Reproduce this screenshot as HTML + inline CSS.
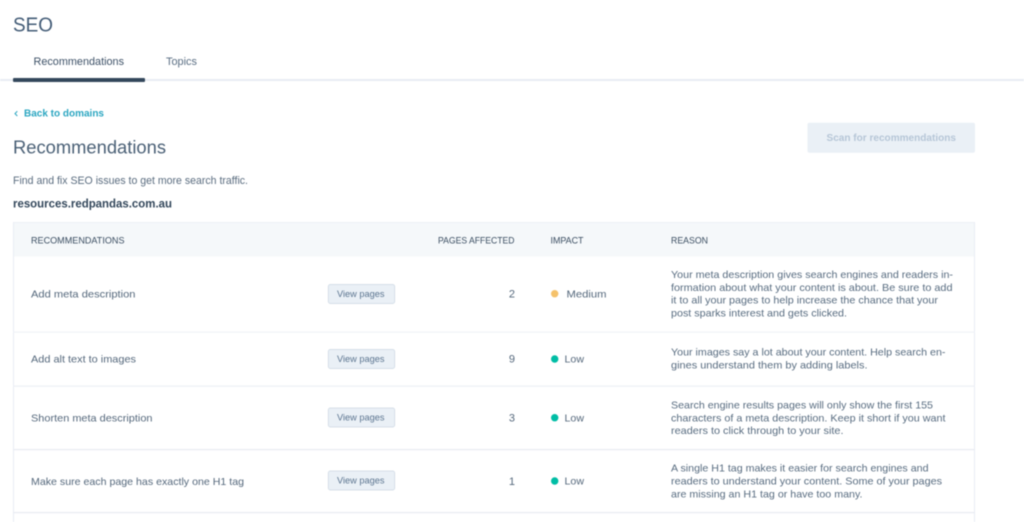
<!DOCTYPE html>
<html lang="en">
<head>
<meta charset="utf-8">
<title>SEO Recommendations</title>
<style>
html,body{margin:0;padding:0;background:#fff;width:1024px;height:522px;overflow:hidden}
svg{display:block;filter:blur(.4px)}
text{font-family:"Liberation Sans",sans-serif;fill:#55687c;font-size:10.5px}
.h{font-size:9.5px;fill:#3a4d61}
.r{font-size:10.5px;fill:#586c80}
.b{font-size:9px;fill:#5c7590}
</style>
</head>
<body>
<svg width="1024" height="522" viewBox="0 0 1024 522" xmlns="http://www.w3.org/2000/svg">
<rect width="1024" height="522" fill="#fff"/>
<text x="13" y="31.5" style="font-size:20px;fill:#425b76" textLength="40" lengthAdjust="spacingAndGlyphs">SEO</text>
<text x="33.5" y="65" style="font-size:11px;fill:#3d5167" textLength="90.5" lengthAdjust="spacingAndGlyphs">Recommendations</text>
<text x="166" y="65" style="font-size:11px;fill:#5a6e83" textLength="31" lengthAdjust="spacingAndGlyphs">Topics</text>
<rect x="0" y="79" width="1024" height="2" fill="#e8edf3"/>
<rect x="13" y="78" width="132" height="4" rx="1" fill="#33475b"/>
<path d="M17.3 111.2 L15 113.6 L17.3 116" fill="none" stroke="#2aa5c0" stroke-width="1"/>
<text x="24" y="116.7" style="font-size:10.5px;font-weight:bold;fill:#2ba6c1" textLength="80" lengthAdjust="spacingAndGlyphs">Back to domains</text>
<text x="13" y="153.5" style="font-size:18px;fill:#4a6076" textLength="153" lengthAdjust="spacingAndGlyphs">Recommendations</text>
<text x="13" y="184" style="font-size:11px;fill:#5a6c7f" textLength="235" lengthAdjust="spacingAndGlyphs">Find and fix SEO issues to get more search traffic.</text>
<text x="13" y="207.5" style="font-size:12px;font-weight:bold;fill:#33475b" textLength="159" lengthAdjust="spacingAndGlyphs">resources.redpandas.com.au</text>

<rect x="807.5" y="122.7" width="167.5" height="30" rx="2" fill="#eaf0f6"/>
<text x="826.5" y="141" style="font-size:10px;font-weight:bold;fill:#b6c6d7" textLength="129.5" lengthAdjust="spacingAndGlyphs">Scan for recommendations</text>

<rect x="13.5" y="222.5" width="961" height="34" fill="#f5f8fa"/>
<rect x="13" y="222" width="962" height="1" fill="#edf1f6"/>
<rect x="13" y="222" width="1" height="300" fill="#e9edf4"/>
<rect x="974" y="222" width="1" height="300" fill="#e9edf4"/>
<rect x="13" y="331.5" width="962" height="1.2" fill="#eff2f7"/>
<rect x="13" y="385.5" width="962" height="1.2" fill="#eceff5"/>
<rect x="13" y="449" width="962" height="1.2" fill="#e8ebf2"/>
<rect x="13" y="512" width="962" height="1.2" fill="#e8ebf2"/>

<text class="h" x="31" y="243.7" textLength="93.5" lengthAdjust="spacingAndGlyphs">RECOMMENDATIONS</text>
<text class="h" x="438" y="243.7" textLength="76.5" lengthAdjust="spacingAndGlyphs">PAGES AFFECTED</text>
<text class="h" x="550.5" y="243.7" textLength="33" lengthAdjust="spacingAndGlyphs">IMPACT</text>
<text class="h" x="671" y="243.7" textLength="37" lengthAdjust="spacingAndGlyphs">REASON</text>

<text x="31" y="297.7" textLength="104.5" lengthAdjust="spacingAndGlyphs">Add meta description</text>
<text x="31" y="362.7" textLength="105" lengthAdjust="spacingAndGlyphs">Add alt text to images</text>
<text x="31" y="421.7" textLength="121.5" lengthAdjust="spacingAndGlyphs">Shorten meta description</text>
<text x="31" y="485" textLength="213" lengthAdjust="spacingAndGlyphs">Make sure each page has exactly one H1 tag</text>

<g fill="#eaf0f6" stroke="#cbd6e2" stroke-width=".7">
<rect x="328.3" y="284.5" width="66.4" height="19" rx="2"/>
<rect x="328.3" y="349.5" width="66.4" height="19" rx="2"/>
<rect x="328.3" y="408" width="66.4" height="19" rx="2"/>
<rect x="328.3" y="471" width="66.4" height="19" rx="2"/>
</g>
<text class="b" x="337" y="297" textLength="47.5" lengthAdjust="spacingAndGlyphs">View pages</text>
<text class="b" x="337" y="362" textLength="47.5" lengthAdjust="spacingAndGlyphs">View pages</text>
<text class="b" x="337" y="420.5" textLength="47.5" lengthAdjust="spacingAndGlyphs">View pages</text>
<text class="b" x="337" y="483.5" textLength="47.5" lengthAdjust="spacingAndGlyphs">View pages</text>

<g text-anchor="end">
<text x="515" y="297.5" style="font-size:11px">2</text>
<text x="515" y="362.5" style="font-size:11px">9</text>
<text x="515" y="421.5" style="font-size:11px">3</text>
<text x="515" y="485" style="font-size:11px">1</text>
</g>

<circle cx="554.7" cy="293.7" r="3.7" fill="#f5c26b"/>
<circle cx="554.7" cy="359" r="3.7" fill="#00bda5"/>
<circle cx="554.7" cy="417.7" r="3.7" fill="#00bda5"/>
<circle cx="554.7" cy="481" r="3.7" fill="#00bda5"/>
<text x="566.5" y="297.7" textLength="40" lengthAdjust="spacingAndGlyphs">Medium</text>
<text x="564.5" y="362.7" textLength="19.5" lengthAdjust="spacingAndGlyphs">Low</text>
<text x="564.5" y="421.7" textLength="19.5" lengthAdjust="spacingAndGlyphs">Low</text>
<text x="564.5" y="484.7" textLength="19.5" lengthAdjust="spacingAndGlyphs">Low</text>

<text class="r" x="671" y="278" textLength="282" lengthAdjust="spacingAndGlyphs">Your meta description gives search engines and readers in-</text>
<text class="r" x="671" y="291" textLength="281.5" lengthAdjust="spacingAndGlyphs">formation about what your content is about. Be sure to add</text>
<text class="r" x="671" y="303.7" textLength="267" lengthAdjust="spacingAndGlyphs">it to all your pages to help increase the chance that your</text>
<text class="r" x="671" y="316.7" textLength="176" lengthAdjust="spacingAndGlyphs">post sparks interest and gets clicked.</text>

<text class="r" x="671" y="355.7" textLength="274.5" lengthAdjust="spacingAndGlyphs">Your images say a lot about your content. Help search en-</text>
<text class="r" x="671" y="368.5" textLength="196.5" lengthAdjust="spacingAndGlyphs">gines understand them by adding labels.</text>

<text class="r" x="671" y="408.3" textLength="262" lengthAdjust="spacingAndGlyphs">Search engine results pages will only show the first 155</text>
<text class="r" x="671" y="421.3" textLength="274.5" lengthAdjust="spacingAndGlyphs">characters of a meta description. Keep it short if you want</text>
<text class="r" x="671" y="434" textLength="172.5" lengthAdjust="spacingAndGlyphs">readers to click through to your site.</text>

<text class="r" x="671" y="471.7" textLength="257.5" lengthAdjust="spacingAndGlyphs">A single H1 tag makes it easier for search engines and</text>
<text class="r" x="671" y="484.7" textLength="271" lengthAdjust="spacingAndGlyphs">readers to understand your content. Some of your pages</text>
<text class="r" x="671" y="497.3" textLength="191.5" lengthAdjust="spacingAndGlyphs">are missing an H1 tag or have too many.</text>
</svg>
</body>
</html>
